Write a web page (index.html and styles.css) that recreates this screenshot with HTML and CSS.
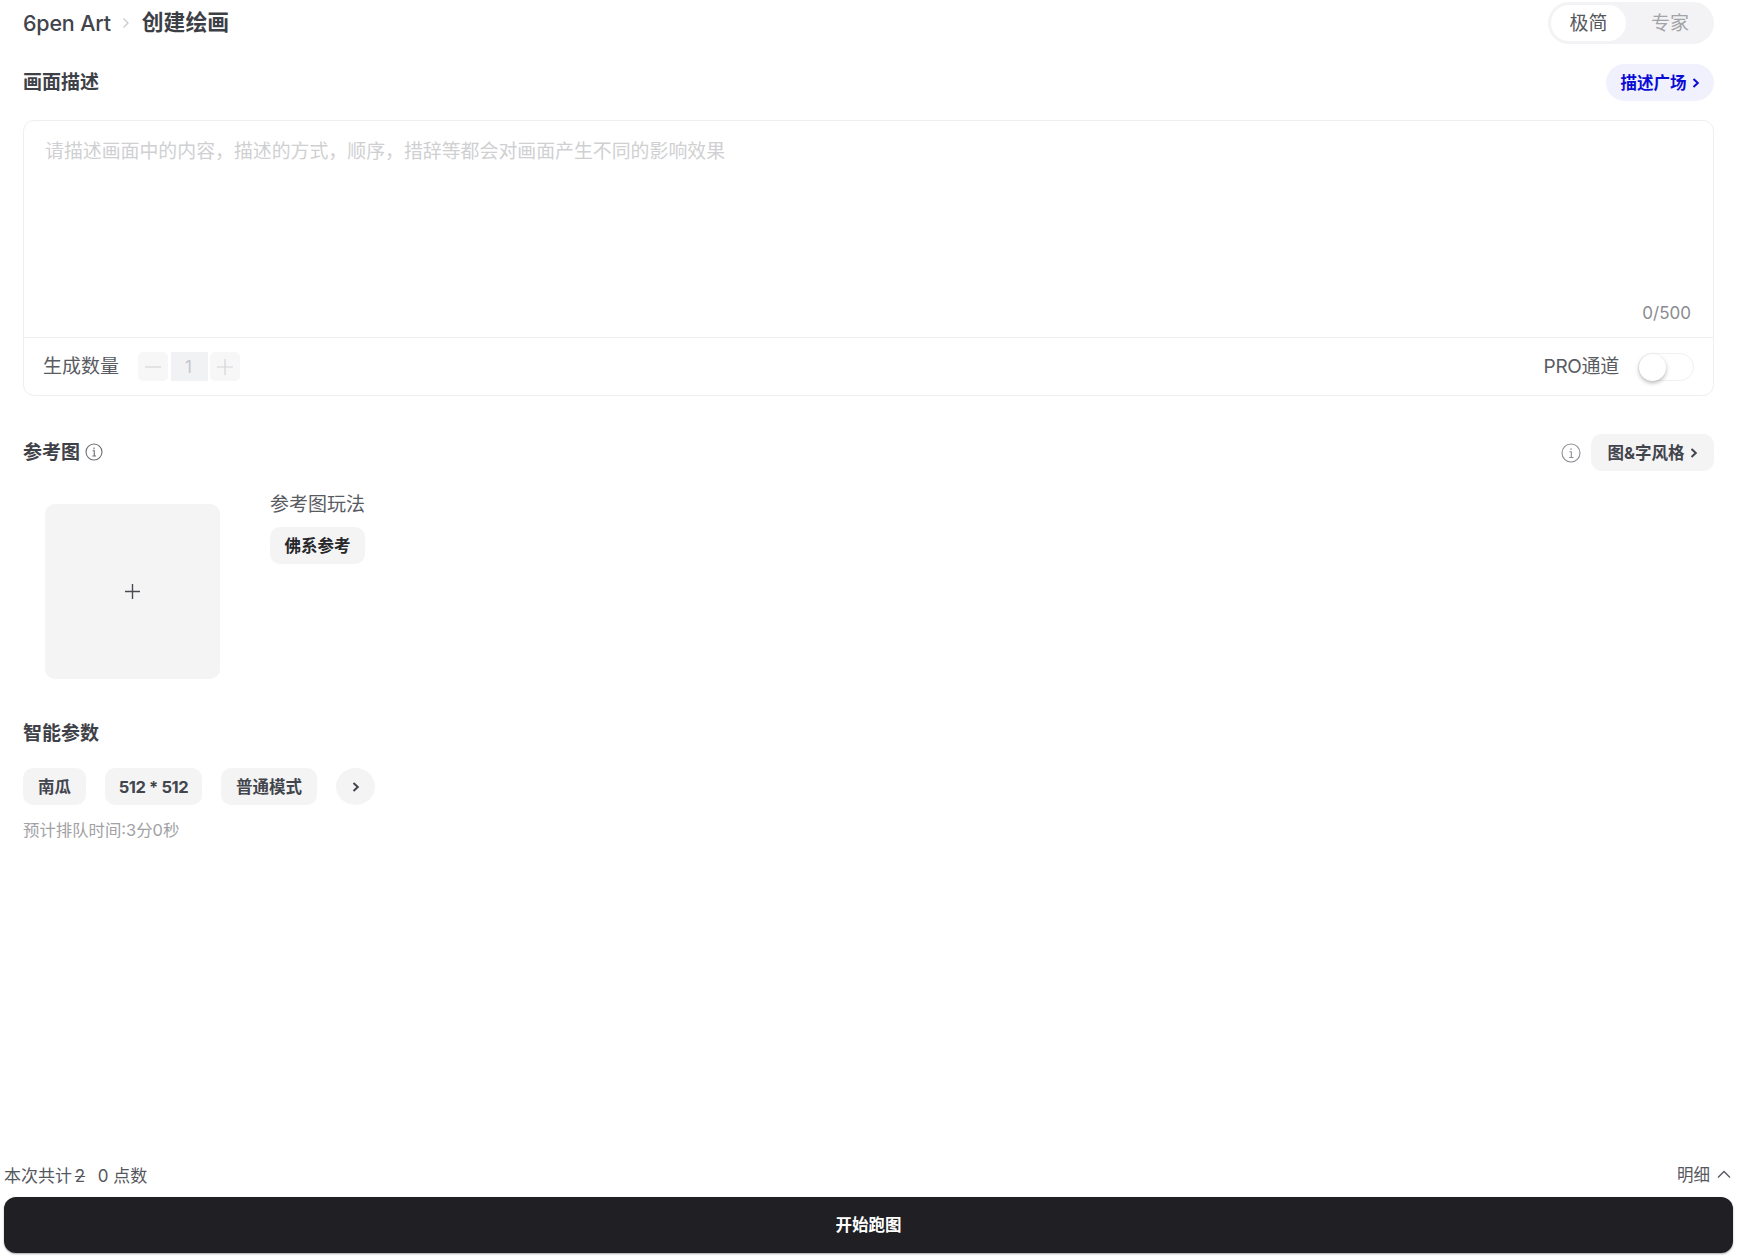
FILE: index.html
```html
<!DOCTYPE html>
<html lang="zh-CN">
<head>
<meta charset="utf-8">
<title>6pen Art</title>
<link rel="stylesheet" href="styles.css">
</head>
<body>
<div class="page">
  <main class="main">
    <header class="topbar">
      <nav class="crumbs">
        <span class="crumb-root">6pen Art</span>
        <svg class="crumb-sep" viewBox="0 0 10 14" width="10" height="14"><path d="M2.5 2.5 7 7l-4.500 4.500" fill="none" stroke="#c9cacd" stroke-width="1.300"/></svg>
        <span class="crumb-cur">创建绘画</span>
      </nav>
      <div class="mode">
        <span class="mode-item mode-on">极简</span>
        <span class="mode-item">专家</span>
      </div>
    </header>

    <div class="row-head head-desc">
      <h2 class="title">画面描述</h2>
      <a class="pill pill-blue">描述广场<svg class="chev" viewBox="0 0 8 10" width="8" height="10"><path d="M1.500 1 5.800 5 1.500 9" fill="none" stroke="currentColor" stroke-width="2"/></svg></a>
    </div>

    <section class="box">
      <div class="box-text">
        <p class="placeholder">请描述画面中的内容，描述的方式，顺序，措辞等都会对画面产生不同的影响效果</p>
        <span class="count">0/500</span>
      </div>
      <div class="box-foot">
        <span class="label">生成数量</span>
        <div class="stepper">
          <span class="step"><svg viewBox="0 0 16 16" width="16" height="16"><path d="M0 8h16" stroke="#d3d5d9" stroke-width="1.200"/></svg></span>
          <span class="step-val">1</span>
          <span class="step"><svg viewBox="0 0 16 16" width="16" height="16"><path d="M0 8h16M8 0v16" stroke="#d3d5d9" stroke-width="1.200"/></svg></span>
        </div>
        <span class="label label-pro">PRO通道</span>
        <span class="switch"><span class="knob"></span></span>
      </div>
    </section>

    <div class="row-head head-ref">
      <div class="title-wrap">
        <h2 class="title">参考图</h2>
        <svg class="info" viewBox="0 0 18 18" width="18" height="18"><circle cx="9" cy="9" r="8" fill="none" stroke="#6b6e75" stroke-width="1.100"/><path d="M7.600 7.800H9.300V13M7.400 13h3.600M9 4.600v1.600" fill="none" stroke="#6b6e75" stroke-width="1.100"/></svg>
      </div>
      <div class="ref-actions">
        <svg class="info-lg" viewBox="0 0 20 20" width="20" height="20"><circle cx="10" cy="10" r="9" fill="none" stroke="#8d8f94" stroke-width="1.100"/><path d="M8.500 8.800H10.300V14.500M8.200 14.500h4.200M10 5.200v1.800" fill="none" stroke="#8d8f94" stroke-width="1.100"/></svg>
        <a class="pill pill-gray">图&amp;字风格<svg class="chev" viewBox="0 0 8 10" width="8" height="10"><path d="M1.500 1 5.800 5 1.500 9" fill="none" stroke="currentColor" stroke-width="2"/></svg></a>
      </div>
    </div>

    <section class="ref-body">
      <div class="upload"><svg viewBox="0 0 15 15" width="15" height="15"><path d="M0 7.500h15M7.500 0v15" stroke="#4a4b50" stroke-width="1.400"/></svg></div>
      <div class="play">
        <span class="label">参考图玩法</span>
        <span class="chip chip-dark">佛系参考</span>
      </div>
    </section>

    <h2 class="title title-params">智能参数</h2>
    <div class="chips">
      <span class="chip">南瓜</span>
      <span class="chip chip-size">512 * 512</span>
      <span class="chip chip-mode">普通模式</span>
      <span class="chip-round"><svg class="chev-only" viewBox="0 0 8 10" width="8" height="10"><path d="M1.500 1 5.800 5 1.500 9" fill="none" stroke="currentColor" stroke-width="2"/></svg></span>
    </div>
    <p class="queue">预计排队时间:3分0秒</p>
  </main>

  <footer class="foot">
    <div class="foot-row">
      <span class="total">本次共计 <s class="struck">2</s> &nbsp;0 点数</span>
      <span class="detail">明细<svg viewBox="0 0 14 9" width="14" height="9"><path d="M1 7.500 7 1.500l6 6" fill="none" stroke="#55585f" stroke-width="1.300"/></svg></span>
    </div>
    <button class="run">开始跑图</button>
  </footer>
</div>
</body>
</html>
```
FILE: styles.css
```css
* { box-sizing: border-box; }
html, body { margin: 0; padding: 0; background: #fff; }
body {
  font-family: Inter, "Noto Sans CJK SC", sans-serif;
  color: #43454c;
}
.page {
  height: 1259px;
  display: flex;
  flex-direction: column;
  justify-content: space-between;
  overflow: hidden;
}
.main { padding: 0 26px 0 23px; }
.topbar {
  height: 46px;
  padding-top: 2px;
  display: flex;
  justify-content: space-between;
  align-items: flex-start;
}
.crumbs { display: flex; align-items: center; height: 42px; }
.crumb-root { font-size: 21.500px; font-weight: 500; color: #42444b; letter-spacing: -.2px; }
.crumb-sep { margin: 0 11px 0 10px; }
.crumb-cur { font-size: 21.800px; font-weight: 700; color: #3d3f46; line-height: 26px; margin-top: -3px; }
.mode {
  width: 166px;
  height: 42px;
  padding: 3px;
  background: #f3f3f5;
  border-radius: 21px;
  display: flex;
}
.mode-item {
  width: 80px;
  padding-bottom: 4px;
  display: flex;
  align-items: center;
  justify-content: center;
  font-size: 19px;
  color: #a3a4a8;
  border-radius: 18px;
}
.mode-on { width: 75px; background: #fff; color: #55575e; margin-right: 4px; }

.row-head { display: flex; align-items: center; justify-content: space-between; }
.head-desc { margin-top: 18px; height: 37px; }
.title { margin: 0; font-size: 19px; font-weight: 700; color: #3f4148; line-height: 26px; }
.pill {
  display: flex;
  align-items: center;
  justify-content: center;
  gap: 5px;
  height: 37px;
  padding-bottom: 2px;
  font-size: 16.500px;
  font-weight: 700;
}
.pill-blue { width: 108px; background: #f1f1fd; color: #0b0bd6; border-radius: 19px; }
.pill-gray { width: 123px; background: #f4f4f5; color: #43454c; border-radius: 11px; }
.chev { display: block; margin-top: 2px; }

.box {
  margin-top: 19px;
  height: 276px;
  border: 1px solid #efeff1;
  border-radius: 11px;
  display: flex;
  flex-direction: column;
}
.box-text {
  height: 217px;
  padding: 18px 22px 0 21px;
  border-bottom: 1px solid #efeff1;
  display: flex;
  flex-direction: column;
  justify-content: space-between;
}
.placeholder { margin: 0; font-size: 18.900px; line-height: 26px; color: #cfd0d2; white-space: nowrap; }
.count { align-self: flex-end; font-size: 17px; line-height: 22px; color: #8a8b90; margin-bottom: 13px; }
.box-foot { flex: 1; display: flex; align-items: center; padding: 0 19px; }
.label { font-size: 19px; line-height: 26px; color: #595b62; }
.label-pro { margin-left: auto; letter-spacing: -.3px; }
.stepper { display: flex; margin-left: 19px; height: 29px; }
.step {
  width: 30px;
  background: #f7f7f8;
  border-radius: 5px;
  display: flex;
  align-items: center;
  justify-content: center;
}
.step-val {
  width: 37px;
  margin: 0 2px 0 3px;
  padding-right: 2px;
  background: #f1f2f3;
  color: #c4c6ca;
  font-size: 17px;
  display: flex;
  align-items: center;
  justify-content: center;
}
.switch {
  width: 56px;
  height: 28px;
  margin-left: 19px;
  border: 1px solid #f0f0f2;
  border-radius: 14px;
  background: #fff;
  display: block;
  padding: 0;
}
.knob {
  display: block;
  width: 27px;
  height: 27px;
  border-radius: 50%;
  background: #fff;
  box-shadow: 0 2px 4px rgba(0,0,0,.28);
}

.head-ref { margin-top: 38px; height: 37px; }
.title-wrap { display: flex; align-items: center; gap: 5px; }
.info { display: block; margin-top: -2px; }
.ref-actions { display: flex; align-items: center; gap: 10px; }
.ref-body { display: flex; margin-top: 19px; margin-left: 22px; gap: 50px; }
.upload {
  width: 175px;
  height: 175px;
  margin-top: 14px;
  background: #f4f4f5;
  border-radius: 10px;
  display: flex;
  align-items: center;
  justify-content: center;
}
.play { display: flex; flex-direction: column; align-items: flex-start; gap: 9px; padding-top: 2px; }
.chip {
  display: flex;
  align-items: center;
  justify-content: center;
  height: 37px;
  padding: 0 14px 2px;
  background: #f4f4f5;
  border-radius: 10px;
  font-size: 16.500px;
  font-weight: 700;
  color: #43454c;
}
.chip-dark { width: 95px; color: #26272b; padding: 0 0 2px; }
.title-params { margin-top: 42px; }
.chips { display: flex; gap: 19px; margin-top: 21px; }
.chips .chip { min-width: 63px; }
.chips .chip-size { width: 97px; padding: 0; letter-spacing: -.4px; }
.chips .chip-mode { width: 96px; padding: 0 0 2px; }
.chip-round {
  width: 39px;
  height: 37px;
  border-radius: 50%;
  background: #f4f4f5;
  color: #43454c;
  display: flex;
  align-items: center;
  justify-content: center;
}
.chev-only { display: block; }
.queue { margin: 14px 0 0; font-size: 16.400px; line-height: 22px; color: #a1a2a5; }

.foot { padding: 0 7px 6px 4px; }
.foot-row {
  display: flex;
  justify-content: space-between;
  align-items: center;
  height: 28px;
  margin-bottom: 9px;
}
.total { font-size: 17px; color: #55575e; }
.struck { margin: 0 3px 0 -2px; }
.detail { font-size: 16.500px; color: #55575e; display: flex; align-items: center; gap: 7px; padding-right: 2px; }
.run {
  display: block;
  width: 100%;
  height: 56px;
  padding: 0 0 3px;
  border: 0;
  border-radius: 12px;
  background: #1f1f24;
  color: #fff;
  font-family: inherit;
  font-size: 16.500px;
  font-weight: 700;
  box-shadow: 0 1px 2px rgba(0,0,0,.35);
}
```
